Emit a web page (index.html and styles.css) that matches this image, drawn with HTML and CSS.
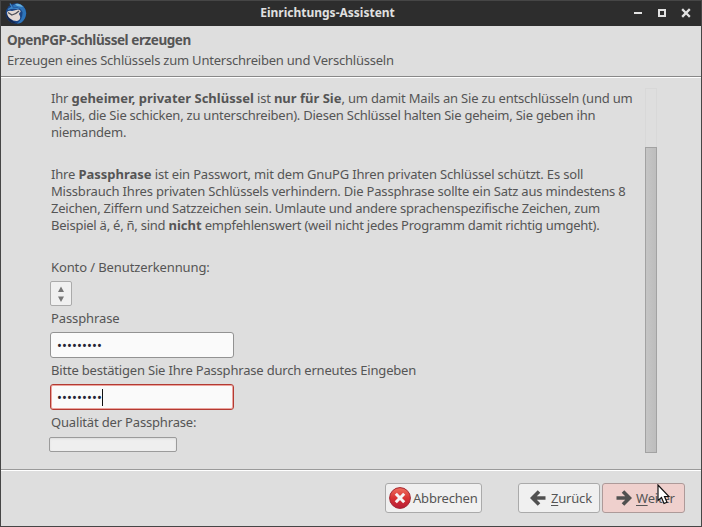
FILE: index.html
```html
<!DOCTYPE html>
<html lang="de">
<head>
<meta charset="utf-8">
<title>Einrichtungs-Assistent</title>
<link rel="stylesheet" href="styles.css">
</head>
<body>
<div class="window">
  <header class="titlebar">
    <svg class="app-icon" width="24" height="24" viewBox="0 0 24 24">
      <circle cx="12" cy="11.5" r="10.3" fill="#1b4585"/>
      <path d="M8 4Q14 -1 19 4Q24 9 21 16Q18 22 13 21.5Q19 17 18.500 10Q16 5 10 5Z" fill="#2d74ba"/>
      <path d="M11 2Q16 1 19 5L13 4Z" fill="#6cb1dc"/>
      <path d="M2 12Q3 19 9 21L13 21.500Q7 19 5 14Z" fill="#13264f"/>
      <path d="M3 10Q5 8 8 9L14 7.500Q17 8 16.500 10Q14 11 16 14Q17 18 13 19Q9 19 6 16.500Q3 14 3 10Z" fill="#e3d9d3"/>
      <path d="M4 10.500L8 13Q12 12 15 9" fill="none" stroke="#4e5058" stroke-width="1.200"/>
      <path d="M6 1.500L8 5L4 7.500Q9 5 15 7" fill="none" stroke="#3b86c8" stroke-width="1.300"/>
    </svg>
    <h1 class="title">Einrichtungs-Assistent</h1>
    <svg class="controls" width="58" height="12" viewBox="0 0 58 12">
      <path d="M1 6H9" stroke="#e2e2e2" stroke-width="2"/>
      <rect x="26" y="3" width="6" height="6" fill="none" stroke="#e2e2e2" stroke-width="2"/>
      <path d="M50 3L56 9M56 3L50 9" stroke="#e2e2e2" stroke-width="2.3" stroke-linecap="square"/>
    </svg>
  </header>
  <section class="heading">
    <h2 class="heading-title">OpenPGP-Schlüssel erzeugen</h2>
    <p class="heading-sub">Erzeugen eines Schlüssels zum Unterschreiben und Verschlüsseln</p>
  </section>
  <main class="page">
    <div class="content">
      <p class="para">
        <span class="line l1">Ihr <b>geheimer, privater Schlüssel</b> ist <b>nur für Sie</b>, um damit Mails an Sie zu entschlüsseln (und um</span>
        <span class="line l2">Mails, die Sie schicken, zu unterschreiben). Diesen Schlüssel halten Sie geheim, Sie geben ihn</span>
        <span class="line l3">niemandem.</span>
      </p>
      <p class="para">
        <span class="line l4">Ihre <b>Passphrase</b> ist ein Passwort, mit dem GnuPG Ihren privaten Schlüssel schützt. Es soll</span>
        <span class="line l5">Missbrauch Ihres privaten Schlüssels verhindern. Die Passphrase sollte ein Satz aus mindestens 8</span>
        <span class="line l6">Zeichen, Ziffern und Satzzeichen sein. Umlaute und andere sprachenspezifische Zeichen, zum</span>
        <span class="line l7">Beispiel ä, é, ñ, sind <b>nicht</b> empfehlenswert (weil nicht jedes Programm damit richtig umgeht).</span>
      </p>
      <div class="form">
        <span class="label account">Konto / Benutzerkennung:</span>
        <div class="select">
          <svg width="8" height="18" viewBox="0 0 8 18"><path d="M4 1.500L7 7H1ZM4 17L1 11.500H7Z" fill="#777"/></svg>
        </div>
        <span class="label pass">Passphrase</span>
        <div class="field"><span class="dots">•••••••••</span></div>
        <span class="label confirm">Bitte bestätigen Sie Ihre Passphrase durch erneutes Eingeben</span>
        <div class="field invalid"><span class="dots">•••••••••</span><span class="caret"></span></div>
        <span class="label quality">Qualität der Passphrase:</span>
        <div class="meter"></div>
      </div>
    </div>
    <div class="scrollbar"><div class="thumb"></div></div>
  </main>
  <footer class="actions">
    <div class="button cancel">
      <svg width="22" height="22" viewBox="0 0 22 22">
        <defs><linearGradient id="red" x2="0" y2="1"><stop stop-color="#ef705f"/><stop offset=".5" stop-color="#d83333"/><stop offset="1" stop-color="#b71c36"/></linearGradient></defs>
        <circle cx="11" cy="11" r="10.4" fill="url(#red)" stroke="#a52530"/>
        <path d="M6.8 6.8L15.2 15.2M15.2 6.8L6.8 15.2" stroke="#f5f5f5" stroke-width="3"/>
      </svg>
      <span class="t-cancel">Abbrechen</span>
    </div>
    <div class="button back">
      <svg width="16" height="16" viewBox="0 0 16 16"><path d="M9 1.5L2.5 8L9 14.5M3 8H15.5" fill="none" stroke="#505050" stroke-width="3.6"/></svg>
      <span class="t-back"><u>Z</u>urück</span>
    </div>
    <div class="button next">
      <svg width="16" height="16" viewBox="0 0 16 16"><path d="M7 1.5L13.5 8L7 14.5M13 8H.5" fill="none" stroke="#505050" stroke-width="3.6"/></svg>
      <span class="t-next"><u>W</u>eiter</span>
      <svg class="pointer" width="13" height="21" viewBox="0 0 13 21"><path d="M1 1V16.5L4.5 13.5L7 19.5L10 18.2L7.5 12.5H12Z" fill="#fff" stroke="#111" stroke-width="1.2"/></svg>
    </div>
  </footer>
</div>
</body>
</html>
```
FILE: styles.css
```css
* { box-sizing: border-box; margin: 0; padding: 0; }
body { font: 13px/17px "Noto Sans", sans-serif; color: #555; background: #dedede; }
.window { width: 702px; height: 527px; border: 1px solid #464646; display: flex; flex-direction: column; overflow: hidden; background: #dedede; }
.titlebar { height: 25px; flex: none; background: #2d2d2d; display: grid; grid-template-columns: 70px 1fr 70px; align-items: center; }
.app-icon { margin-left: 3px; }
.title { justify-self: center; font-size: 12px; line-height: 17px; color: #e0e0e0; white-space: nowrap; margin: 0 47px 2px 0; }
.controls { justify-self: end; margin: 0 10px 1px 0; }
.heading { height: 52px; flex: none; padding: 5px 6px 0; border-bottom: 1px solid #fff; box-shadow: inset 0 -1px #888; white-space: nowrap; }
.heading-title { font-size: 13.5px; line-height: 18px; letter-spacing: -.43px; }
.heading-sub { margin-top: 2px; line-height: 18px; letter-spacing: -.22px; }
.heading-title, .heading-sub { width: max-content; }
.page { flex: 1; display: flex; min-height: 0; padding: 10px 44px 16px 49px; }
.content { width: 595px; flex: none; }
.para { height: 51px; margin: 2px 0 25px 1px; }
.line { display: block; width: max-content; white-space: nowrap; }
.line b { letter-spacing: 0; }
.l1 { letter-spacing: -.19px; }
.l2 { letter-spacing: -.235px; }
.l3 { letter-spacing: -.2px; }
.l4 { letter-spacing: -.175px; }
.l5 { letter-spacing: -.19px; }
.l6 { letter-spacing: -.23px; }
.l7 { letter-spacing: -.24px; }
.form { display: flex; flex-direction: column; align-items: flex-start; padding-top: 17px; }
.label { line-height: 17px; margin-left: 1px; white-space: nowrap; }
.account, .pass { letter-spacing: -.11px; }
.quality { letter-spacing: -.17px; }
.confirm { letter-spacing: -.19px; }
.select { width: 22px; height: 25px; margin: 5px 0 4px; border: 1px solid #aaa; border-radius: 2px; background: #f0f0f0; display: grid; place-items: center; }
.field { width: 184px; height: 26px; margin: 5px 0 4px; padding-left: 6px; border: 1px solid #929292; border-radius: 3px; background: #fafafa; display: flex; align-items: center; color: #252535; }
.dots { letter-spacing: .11px; }
.invalid { border-color: #b33a32; box-shadow: inset 0 0 0 1px #eba49e; }
.caret { width: 1px; height: 17px; background: #111; }
.meter { width: 128px; height: 15px; margin: 6px 0 0 -1px; border: 1px solid #9b9b9b; border-radius: 2px; background: #efefef; box-shadow: inset 0 1px 2px #ddd; }
.scrollbar { width: 12px; height: 365px; border: 1px solid #d8d8d8; }
.thumb { width: 12px; height: 306px; margin: 58px 0 0 -1px; border: 1px solid #a2a2a2; background: linear-gradient(90deg, #c5c5c5, #bdbdbd); }
.actions { height: 57px; flex: none; border-top: 1px solid #9a9a9a; box-shadow: inset 0 1px #fff; padding: 13px 16px 0; display: flex; justify-content: flex-end; }
.button { position: relative; height: 30px; border: 1px solid #aaa; border-radius: 3px; background: #f0f0f0; display: flex; align-items: center; white-space: nowrap; letter-spacing: -.2px; }
.cancel { width: 97px; padding-left: 3px; gap: 2px; margin-right: 36px; }
.back { width: 82px; padding-left: 11px; gap: 5px; margin-right: 2px; }
.next { width: 83px; padding-left: 13px; gap: 4px; background: #efd0cd; border-color: #ad9a99; }
.button u { text-underline-offset: 2px; }
.pointer { position: absolute; left: 54px; top: 0; }
```
